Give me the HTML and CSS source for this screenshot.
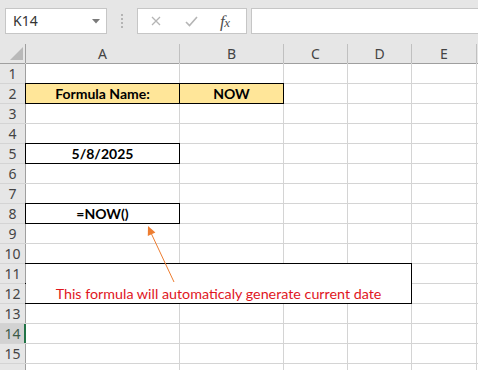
FILE: index.html
```html
<!DOCTYPE html>
<html>
<head>
<meta charset="utf-8">
<link rel="stylesheet" href="styles.css">
</head>
<body>
<div class="app">
  <div class="toolbar">
    <div class="namebox">
      <span class="nb-text">K14</span>
      <svg class="caret" width="8" height="5" viewBox="0 0 8 5"><path d="M0 0H8L4 4.5Z" fill="#7a7a7a"/></svg>
    </div>
    <div class="grip">
      <svg width="3" height="14" viewBox="0 0 3 14"><g fill="#b4b4b4"><rect x="0" y="0" width="2" height="2"/><rect x="0" y="4" width="2" height="2"/><rect x="0" y="8" width="2" height="2"/><rect x="0" y="12" width="2" height="2"/></g></svg>
    </div>
    <div class="fbtns">
      <svg class="ic-x" width="10" height="10" viewBox="0 0 10 10"><path d="M1 1L9 9M9 1L1 9" stroke="#b5b5b5" stroke-width="1.3" fill="none"/></svg>
      <svg class="ic-ok" width="13" height="11" viewBox="0 0 13 11"><path d="M1 6L4.5 9.5L12 1" stroke="#b5b5b5" stroke-width="1.6" fill="none"/></svg>
      <span class="fx">f<span class="fx-x">x</span></span>
    </div>
    <div class="finput"></div>
  </div>

  <div class="sheet">
    <div class="corner"><svg width="13" height="13" viewBox="0 0 13 13"><path d="M13 0V13H0Z" fill="#b9b9b9"/></svg></div>
    <div class="ch">A</div><div class="ch">B</div><div class="ch">C</div><div class="ch">D</div><div class="ch">E</div><div class="ch"></div>

    <div class="rh">1</div><div class="c"></div><div class="c"></div><div class="c"></div><div class="c"></div><div class="c"></div><div class="c"></div>
    <div class="rh">2</div><div class="c box hl">Formula Name:</div><div class="c box hl">NOW</div><div class="c"></div><div class="c"></div><div class="c"></div><div class="c"></div>
    <div class="rh">3</div><div class="c"></div><div class="c"></div><div class="c"></div><div class="c"></div><div class="c"></div><div class="c"></div>
    <div class="rh">4</div><div class="c"></div><div class="c"></div><div class="c"></div><div class="c"></div><div class="c"></div><div class="c"></div>
    <div class="rh">5</div><div class="c box">5/8/2025</div><div class="c"></div><div class="c"></div><div class="c"></div><div class="c"></div><div class="c"></div>
    <div class="rh">6</div><div class="c"></div><div class="c"></div><div class="c"></div><div class="c"></div><div class="c"></div><div class="c"></div>
    <div class="rh">7</div><div class="c"></div><div class="c"></div><div class="c"></div><div class="c"></div><div class="c"></div><div class="c"></div>
    <div class="rh">8</div><div class="c box">=NOW()</div><div class="c"></div><div class="c"></div><div class="c"></div><div class="c"></div><div class="c"></div>
    <div class="rh">9</div><div class="c"></div><div class="c"></div><div class="c"></div><div class="c"></div><div class="c"></div><div class="c"></div>
    <div class="rh">10</div><div class="c"></div><div class="c"></div><div class="c"></div><div class="c"></div><div class="c"></div><div class="c"></div>
    <div class="c merged">This formula will automaticaly generate current date</div>
    <div class="rh">11</div><div class="c"></div><div class="c"></div>
    <div class="rh">12</div><div class="c"></div><div class="c"></div>
    <div class="rh">13</div><div class="c"></div><div class="c"></div><div class="c"></div><div class="c"></div><div class="c"></div><div class="c"></div>
    <div class="rh sel">14</div><div class="c"></div><div class="c"></div><div class="c"></div><div class="c"></div><div class="c"></div><div class="c"></div>
    <div class="rh">15</div><div class="c"></div><div class="c"></div><div class="c"></div><div class="c"></div><div class="c"></div><div class="c"></div>
    <div class="rh"></div><div class="c"></div><div class="c"></div><div class="c"></div><div class="c"></div><div class="c"></div><div class="c"></div>
  </div>

  <svg class="arrow" width="478" height="370" viewBox="0 0 478 370">
    <line x1="174" y1="282" x2="151.5" y2="234" stroke="#ed7d31" stroke-width="1"/>
    <path d="M148 226L155.4 232.6L147.8 235.9Z" fill="#ed7d31"/>
  </svg>
</div>
</body>
</html>
```

FILE: styles.css
```css
html, body {
  margin: 0;
  padding: 0;
}
body {
  width: 478px;
  height: 370px;
  overflow: hidden;
  background: #ffffff;
  font-family: "Noto Sans", "Open Sans", sans-serif;
}
.app {
  position: relative;
  width: 478px;
  height: 370px;
  overflow: hidden;
}
.toolbar {
  height: 44px;
  background: #e6e6e6;
  display: flex;
  align-items: flex-start;
  padding-top: 8px;
  box-sizing: border-box;
}
.namebox {
  margin-left: 5px;
  width: 102px;
  height: 26px;
  box-sizing: border-box;
  background: #fff;
  border: 1px solid #c6c6c6;
  display: flex;
  align-items: center;
  justify-content: space-between;
  padding: 0 6px 0 7px;
  font-size: 14px;
  color: #333;
}
.nb-text {
  line-height: 1;
}
.caret {
  display: block;
}
.grip {
  width: 30px;
  height: 26px;
  display: flex;
  align-items: center;
  justify-content: center;
}
.grip svg { display: block; }
.fbtns {
  width: 110px;
  height: 26px;
  box-sizing: border-box;
  background: #fff;
  border: 1px solid #c6c6c6;
  display: flex;
  align-items: center;
  padding-left: 13px;
}
.ic-x { display: block; margin-right: 24px; }
.ic-ok { display: block; margin-right: 22px; }
.fx {
  font-family: "Liberation Serif", "DejaVu Serif", serif;
  font-style: italic;
  font-size: 17px;
  color: #505050;
  letter-spacing: -0.5px;
  line-height: 1;
}
.fx-x {
  font-size: 13px;
}
.finput {
  margin-left: 4px;
  flex: 1;
  height: 26px;
  box-sizing: border-box;
  background: #fff;
  border: 1px solid #c6c6c6;
  margin-right: -10px;
}

.sheet {
  display: grid;
  grid-template-columns: 25px 153px 103px 63px 63px 64px 30px;
  grid-template-rows: repeat(17, 19px);
  gap: 1px;
  background: #d4d4d4;
}
.corner {
  background: #e6e6e6;
  display: flex;
  align-items: flex-end;
  justify-content: flex-end;
  padding: 0 2px 3px 0;
  box-shadow: 1px 0 0 #9f9f9f, 0 1px 0 #9f9f9f;
}
.corner svg { display: block; }
.ch {
  background: #e6e6e6;
  color: #444;
  font-size: 14px;
  display: flex;
  align-items: center;
  justify-content: center;
  box-shadow: 1px 0 0 #c0c0c0, 0 1px 0 #9f9f9f;
}
.rh {
  background: #e6e6e6;
  color: #444;
  font-size: 14px;
  display: flex;
  align-items: center;
  justify-content: center;
  box-shadow: 1px 0 0 #9f9f9f;
}
.rh.sel {
  background: #d2d2d2;
  color: #3b5a48;
  box-shadow: 1px 0 0 #217346, inset -1px 0 0 #217346;
}
.c {
  background: #fff;
  font-family: "Lato", "Open Sans", sans-serif;
  font-size: 14.3px;
  color: #000;
  display: flex;
  align-items: center;
  justify-content: center;
}
.box {
  outline: 1px solid #000;
  font-weight: bold;
  font-size: 14px;
}
.hl {
  background: #ffe699;
}
.merged {
  grid-column: 2 / 6;
  grid-row: 12 / 14;
  outline: 1px solid #000;
  align-items: flex-end;
  color: #e0161e;
  padding-bottom: 1px;
}
.arrow {
  position: absolute;
  left: 0;
  top: 0;
  pointer-events: none;
}
```
